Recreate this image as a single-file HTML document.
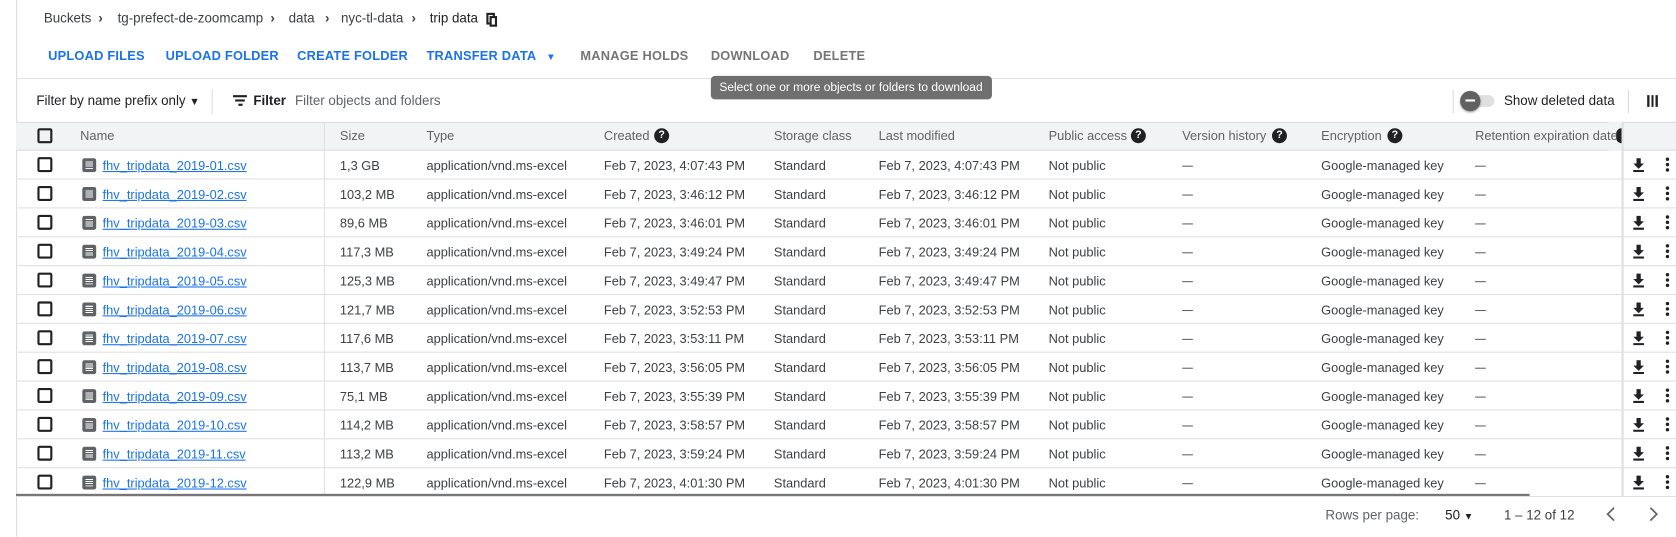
<!DOCTYPE html>
<html><head><meta charset="utf-8"><style>
*{box-sizing:border-box;margin:0;padding:0}
html,body{width:1676px;height:537px;overflow:hidden;background:#fff}
#w{position:absolute;left:0;top:0;width:1568px;height:502px;transform:scale(1.0689);transform-origin:0 0;font-family:"Liberation Sans",Arial,sans-serif;font-size:12px;color:#3c4043}
.a{position:absolute;white-space:nowrap}
.bc{top:10px;font-size:12.5px;color:#3c4043}
.btn{top:45px;font-size:12px;font-weight:bold;color:#1a73e8;letter-spacing:.2px}
.dis{color:#757575}
.hdr{position:absolute;left:15px;top:114px;width:1553px;height:27px;background:#f1f3f4;border-top:1px solid #dadce0;border-bottom:1px solid #dadce0}
.hd{top:120px;color:#5f6368;font-size:12px}
.row{position:absolute;left:15px;width:1553px;height:27px;border-bottom:1px solid #e0e0e0}
.cb{position:absolute;left:35px;width:14px;height:14px;border:2px solid #202124;border-radius:2px}
.q{position:absolute;top:0px;width:14px;height:14px;border-radius:50%;background:#202124;color:#fff;font-size:10px;font-weight:bold;text-align:center;line-height:14px}
.c{color:#3c4043;font-size:12px}
.lk{color:#1a73e8;text-decoration:underline}
.fi{position:absolute;left:77px;width:13px;height:13px;background:#5f6368;border-radius:2px}
.fi:before{content:"";position:absolute;left:3px;top:3px;width:7px;height:7px;background:repeating-linear-gradient(#fff 0 1px,transparent 1px 2px)}
</style></head><body><div id="w">
<div class="a" style="left:15px;top:0;width:1px;height:502px;background:#dadce0"></div>
<div class="a bc" style="left:41px">Buckets</div>
<div class="a bc" style="left:92px;font-weight:bold">›</div>
<div class="a bc" style="left:110px">tg-prefect-de-zoomcamp</div>
<div class="a bc" style="left:253px;font-weight:bold">›</div>
<div class="a bc" style="left:270px">data</div>
<div class="a bc" style="left:304px;font-weight:bold">›</div>
<div class="a bc" style="left:319px">nyc-tl-data</div>
<div class="a bc" style="left:385px;font-weight:bold">›</div>
<div class="a bc" style="left:402px;color:#202124">trip data</div>
<div class="a" style="left:455px;top:12px;width:8px;height:11px;border:2px solid #202124"></div>
<div class="a" style="left:458px;top:15px;width:7px;height:10px;background:#fff;border:2px solid #202124"></div>

<div class="a btn" style="left:45px">UPLOAD FILES</div>
<div class="a btn" style="left:155px">UPLOAD FOLDER</div>
<div class="a btn" style="left:278px">CREATE FOLDER</div>
<div class="a btn" style="left:399px">TRANSFER DATA <span style="font-size:9px;margin-left:6px">▼</span></div>
<div class="a btn dis" style="left:543px">MANAGE HOLDS</div>
<div class="a btn dis" style="left:665px">DOWNLOAD</div>
<div class="a btn dis" style="left:761px">DELETE</div>
<div class="a" style="left:15px;top:73px;width:1553px;height:1px;background:#e0e0e0"></div>
<div class="a" style="left:665px;top:71px;width:263px;height:22px;background:#6f6f6f;border-radius:4px;color:#fff;font-size:11.2px;padding:5px 0 0 8px">Select one or more objects or folders to download</div>

<div class="a" style="left:34px;top:87px;font-size:12.5px;color:#202124">Filter by name prefix only <span style="font-size:10px">▼</span></div>
<div class="a" style="left:198px;top:83px;width:1px;height:24px;background:#dadce0"></div>
<div class="a" style="left:218px;top:89px;width:13px;height:2px;background:#202124"></div>
<div class="a" style="left:220px;top:93px;width:9px;height:2px;background:#202124"></div>
<div class="a" style="left:223px;top:97px;width:4px;height:2px;background:#202124"></div>
<div class="a" style="left:237px;top:87px;font-size:12.5px;font-weight:bold;color:#202124">Filter</div>
<div class="a" style="left:276px;top:87px;font-size:12.5px;color:#5f6368">Filter objects and folders</div>
<div class="a" style="left:1359px;top:84px;width:1px;height:22px;background:#dadce0"></div>
<div class="a" style="left:1372px;top:89px;width:26px;height:11px;border-radius:6px;background:#e0e0e0"></div>
<div class="a" style="left:1366px;top:85px;width:19px;height:19px;border-radius:50%;background:#616161;box-shadow:0 1px 2px rgba(0,0,0,.4)"></div>
<div class="a" style="left:1371px;top:93px;width:9px;height:2px;background:#fff"></div>
<div class="a" style="left:1407px;top:87px;font-size:12.5px;color:#202124">Show deleted data</div>
<div class="a" style="left:1523px;top:84px;width:1px;height:22px;background:#dadce0"></div>
<div class="a" style="left:1541px;top:89px;width:10px;height:11px;background:repeating-linear-gradient(90deg,#202124 0 2px,#fff 2px 4px)"></div>

<div class="hdr"></div>
<div class="a" style="left:303px;top:114px;width:1px;height:351px;background:#e0e0e0"></div>
<div class="a" style="left:1505px;top:114px;width:12px;height:27px;background:#f1f3f4"></div>
<div class="cb" style="top:120px"></div>
<div class="a hd" style="left:75px">Name</div>
<div class="a hd" style="left:318px">Size</div>
<div class="a hd" style="left:399px">Type</div>
<div class="a hd" style="left:565px">Created<span class="q" style="left:47px">?</span></div>
<div class="a hd" style="left:724px">Storage class</div>
<div class="a hd" style="left:822px">Last modified</div>
<div class="a hd" style="left:981px">Public access<span class="q" style="left:77px">?</span></div>
<div class="a hd" style="left:1106px">Version history<span class="q" style="left:84px">?</span></div>
<div class="a hd" style="left:1236px">Encryption<span class="q" style="left:62px">?</span></div>
<div class="a hd" style="left:1380px;width:132px;overflow:hidden">Retention expiration date</div>
<div class="a" style="left:1512px;top:120px;width:5px;height:14px;background:#202124;border-radius:7px 0 0 7px"></div>

<div id="rows"></div>
<div class="a" style="left:1517px;top:114px;width:2px;height:351px;background:#e0e0e0"></div>
<script>
var d=[["01","1,3 GB","4:07:43"],["02","103,2 MB","3:46:12"],["03","89,6 MB","3:46:01"],["04","117,3 MB","3:49:24"],["05","125,3 MB","3:49:47"],["06","121,7 MB","3:52:53"],["07","117,6 MB","3:53:11"],["08","113,7 MB","3:56:05"],["09","75,1 MB","3:55:39"],["10","114,2 MB","3:58:57"],["11","113,2 MB","3:59:24"],["12","122,9 MB","4:01:30"]];
var h="";
d.forEach(function(r,i){var y=141+i*27,t=y+7;
h+='<div class="row" style="top:'+y+'px"></div><div class="cb" style="top:'+(y+6)+'px"></div><div class="fi" style="top:'+(y+7)+'px"></div>'
+'<div class="a c lk" style="left:96px;top:'+t+'px">fhv_tripdata_2019-'+r[0]+'.csv</div>'
+'<div class="a c" style="left:318px;top:'+t+'px">'+r[1]+'</div>'
+'<div class="a c" style="left:399px;top:'+t+'px">application/vnd.ms-excel</div>'
+'<div class="a c" style="left:565px;top:'+t+'px">Feb 7, 2023, '+r[2]+' PM</div>'
+'<div class="a c" style="left:724px;top:'+t+'px">Standard</div>'
+'<div class="a c" style="left:822px;top:'+t+'px">Feb 7, 2023, '+r[2]+' PM</div>'
+'<div class="a c" style="left:981px;top:'+t+'px">Not public</div>'
+'<div class="a" style="left:1106px;top:'+(y+14)+'px;width:10px;height:1px;background:#5f6368"></div>'
+'<div class="a c" style="left:1236px;top:'+t+'px">Google-managed key</div>'
+'<div class="a" style="left:1380px;top:'+(y+14)+'px;width:10px;height:1px;background:#5f6368"></div>'
+'<svg class="a" style="left:1526px;top:'+(y+6)+'px" width="14" height="14" viewBox="0 0 14 14"><path d="M5 1h4v5h3l-5 5-5-5h3z M2 12h10v2H2z" fill="#202124"/></svg>'
+'<svg class="a" style="left:1557px;top:'+(y+6)+'px" width="6" height="14" viewBox="0 0 6 14"><circle cx="3" cy="2" r="1.6" fill="#202124"/><circle cx="3" cy="7" r="1.6" fill="#202124"/><circle cx="3" cy="12" r="1.6" fill="#202124"/></svg>';});
document.getElementById("rows").innerHTML=h;
</script>
<div class="a" style="left:15px;top:462px;width:1416px;height:2px;background:#757575"></div>
<div class="a" style="left:1240px;top:475px;font-size:12.5px;color:#5f6368">Rows per page:</div>
<div class="a" style="left:1352px;top:475px;font-size:12.5px;color:#202124">50 <span style="font-size:9px">▼</span></div>
<div class="a" style="left:1407px;top:475px;font-size:12.5px;color:#3c4043">1 – 12 of 12</div>
<svg class="a" style="left:1502px;top:474px" width="10" height="14" viewBox="0 0 10 14"><path d="M8 1L2 7l6 6" fill="none" stroke="#5f6368" stroke-width="1.6"/></svg>
<svg class="a" style="left:1542px;top:474px" width="10" height="14" viewBox="0 0 10 14"><path d="M2 1l6 6-6 6" fill="none" stroke="#5f6368" stroke-width="1.6"/></svg>
</div></body></html>
